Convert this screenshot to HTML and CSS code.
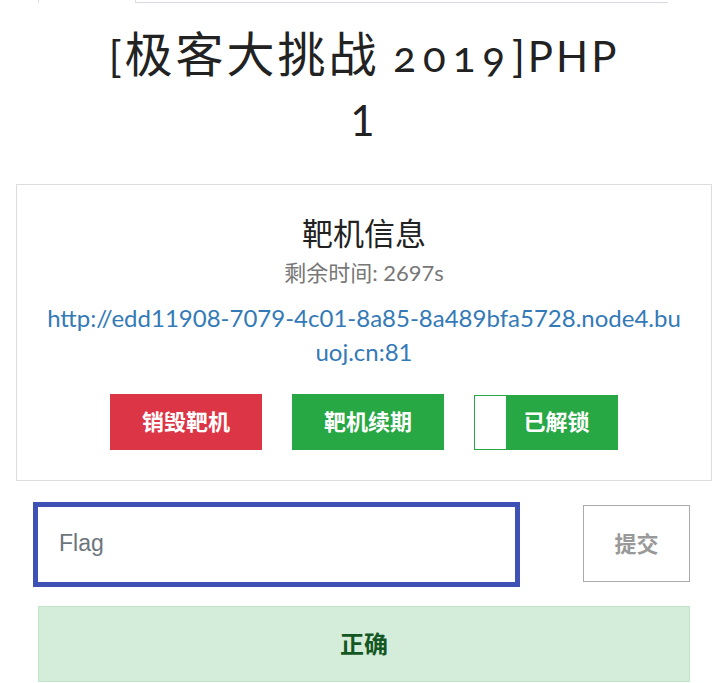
FILE: index.html
```html
<!DOCTYPE html>
<html lang="zh-CN">
<head>
<meta charset="utf-8">
<title>[极客大挑战 2019]PHP 1</title>
<link rel="stylesheet" href="styles.css">
</head>
<body>
<div class="tabs-edge">
  <span class="tab-line-a"></span>
  <span class="tab-line-b"></span>
</div>
<h1 class="title">[<span class="cjk">极客大挑战</span> <span class="year">2019</span>]PHP 1</h1>
<section class="card">
  <h3 class="card-title">靶机信息</h3>
  <p class="timer">剩余时间: 2697s</p>
  <p class="link"><a href="#">http://edd11908-7079-4c01-8a85-8a489bfa5728.node4.buuoj.cn:81</a></p>
  <div class="actions">
    <button class="btn btn-red">销毁靶机</button>
    <button class="btn btn-green">靶机续期</button>
    <button class="btn btn-unlocked"><span class="knob"></span><span class="unlock-label">已解锁</span></button>
  </div>
</section>
<form class="flag-row">
  <input class="flag-input" type="text" placeholder="Flag">
  <button class="submit" type="button">提交</button>
</form>
<div class="alert">正确</div>
</body>
</html>
```
FILE: styles.css
```css
* { box-sizing: border-box; }
html, body { margin: 0; padding: 0; background: #fff; }
body {
  width: 728px;
  font-family: Lato, "Noto Sans CJK SC", sans-serif;
  color: #333;
  overflow: hidden;
}
.tabs-edge {
  position: relative;
  height: 3px;
}
.tab-line-a {
  position: absolute;
  left: 38px; top: 0;
  width: 1px; height: 3px;
  background: #ddd;
}
.tab-line-b {
  position: absolute;
  left: 135px; top: 0;
  width: 533px; height: 3px;
  border-left: 1px solid #ddd;
  border-bottom: 1px solid #dcd9e6;
}
.title {
  margin: 19px auto 0;
  width: 530px;
  text-align: center;
  font-family: Lato, "Noto Sans CJK SC", sans-serif;
  font-weight: 400;
  font-size: 42px;
  line-height: 64px;
  color: #222;
  letter-spacing: 3px;
}
.cjk {
  font-size: 48px;
  line-height: 64px;
  letter-spacing: 3px;
}
.year { font-feature-settings: "onum" 1; font-variant-numeric: oldstyle-nums; letter-spacing: 7px; }
.card {
  margin: 32px 16px 0;
  width: 696px;
  border: 1px solid #ddd;
  padding: 31px 28px 30px;
  text-align: center;
}
.card-title {
  margin: 0;
  font-size: 31px;
  font-weight: 400;
  line-height: 35px;
  color: #222;
}
.timer {
  margin: 5px 0 0;
  font-size: 22px;
  line-height: 33px;
  color: #777;
}
.link {
  margin: 12px 0 0;
  font-size: 24px;
  line-height: 34px;
  word-break: break-all;
}
.link a { color: #337ab7; text-decoration: none; }
.actions {
  margin-top: 25px;
  display: flex;
  justify-content: center;
  gap: 30px;
}
.btn {
  height: 56px;
  width: 152px;
  border: 0;
  padding: 0 0 4px;
  font-family: Lato, "Noto Sans CJK SC", sans-serif;
  font-size: 22px;
  font-weight: 700;
  color: #fff;
}
.btn-red { background: #dc3545; }
.btn-green { background: #28a745; }
.btn-unlocked {
  width: 144px;
  height: 55px;
  margin-top: 1px;
  padding: 0;
  background: #28a745;
  border: 1px solid #28a745;
  display: flex;
  align-items: stretch;
}
.knob { width: 31px; background: #fff; }
.unlock-label { flex: 1; display: flex; align-items: center; justify-content: center; padding: 0 10px 5px 0; }
.flag-row {
  margin: 21px 0 0 33px;
  width: 657px;
  display: flex;
  align-items: center;
  justify-content: space-between;
}
.flag-input {
  width: 487px;
  height: 85px;
  border: 5px solid #3f51b5;
  outline: none;
  padding: 0 0 2px 21px;
  font-family: "Liberation Sans", Arial, sans-serif;
  font-size: 23px;
  color: #333;
}
.flag-input::placeholder { color: #6c757d; }
.submit {
  width: 107px;
  height: 77px;
  margin-top: -3px;
  padding: 0 0 3px;
  background: #fff;
  border: 1px solid #aaa;
  font-family: Lato, "Noto Sans CJK SC", sans-serif;
  font-size: 22px;
  font-weight: 700;
  color: #999;
}
.alert {
  margin: 19px 0 0 38px;
  width: 652px;
  height: 76px;
  padding-bottom: 3px;
  background: #d4edda;
  border: 1px solid #c3e6cb;
  color: #155724;
  font-size: 24px;
  font-weight: 700;
  display: flex;
  align-items: center;
  justify-content: center;
}
```
